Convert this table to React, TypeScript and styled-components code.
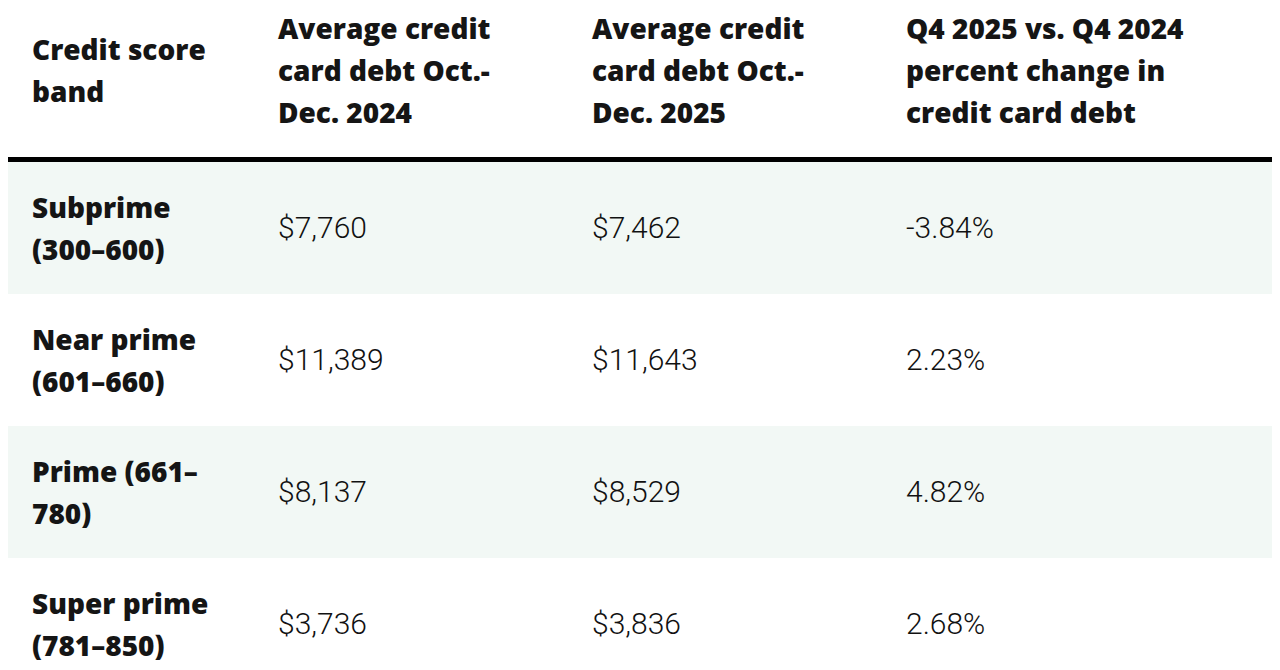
import styled, { createGlobalStyle } from "styled-components";

const GlobalStyle = createGlobalStyle`
  body {
    margin: 0 8px;
    background: #ffffff;
    color: #151515;
    font-family: "Open Sans", "Liberation Sans", sans-serif;
  }
`;

const Table = styled.table`
  width: 100%;
  border-collapse: collapse;
  table-layout: fixed;
`;

const Col = styled.col<{ $width?: number }>`
  width: ${(p) => (p.$width ? `${p.$width}px` : "auto")};
`;

const HeadCell = styled.th`
  padding: 7px 24px 24px;
  border-bottom: 5px solid #000000;
  text-align: left;
  vertical-align: middle;
  font-size: 28px;
  line-height: 42px;
  font-weight: 800;
  color: #151515;
`;

const Row = styled.tr<{ $shaded: boolean }>`
  background: ${(p) => (p.$shaded ? "#f2f8f5" : "#ffffff")};
`;

const LabelCell = styled.td`
  padding: 24px;
  vertical-align: middle;
  font-size: 28px;
  line-height: 42px;
  font-weight: 800;
  color: #151515;
`;

const ValueCell = styled.td`
  padding: 24px;
  vertical-align: middle;
  font-family: Roboto, "Liberation Sans", sans-serif;
  font-size: 30px;
  font-weight: 300;
  line-height: 42px;
  color: #111111;
`;

const headers = [
  ["Credit score", "band"],
  ["Average credit", "card debt Oct.-", "Dec. 2024"],
  ["Average credit", "card debt Oct.-", "Dec. 2025"],
  ["Q4 2025 vs. Q4 2024", "percent change in", "credit card debt"],
];

const rows = [
  { label: ["Subprime", "(300–600)"], values: ["$7,760", "$7,462", "-3.84%"] },
  { label: ["Near prime", "(601–660)"], values: ["$11,389", "$11,643", "2.23%"] },
  { label: ["Prime (661–", "780)"], values: ["$8,137", "$8,529", "4.82%"] },
  { label: ["Super prime", "(781–850)"], values: ["$3,736", "$3,836", "2.68%"] },
];

function Lines({ lines }: { lines: string[] }) {
  return (
    <>
      {lines.map((line, i) => (
        <span key={i}>
          {i > 0 && <br />}
          {line}
        </span>
      ))}
    </>
  );
}

export default function App() {
  return (
    <>
      <GlobalStyle />
      <Table>
        <colgroup>
          <Col $width={246} />
          <Col $width={314} />
          <Col $width={314} />
          <Col />
        </colgroup>
        <thead>
          <tr>
            {headers.map((h, i) => (
              <HeadCell key={i}>
                <Lines lines={h} />
              </HeadCell>
            ))}
          </tr>
        </thead>
        <tbody>
          {rows.map((row, i) => (
            <Row key={i} $shaded={i % 2 === 0}>
              <LabelCell>
                <Lines lines={row.label} />
              </LabelCell>
              {row.values.map((v, j) => (
                <ValueCell key={j}>{v}</ValueCell>
              ))}
            </Row>
          ))}
        </tbody>
      </Table>
    </>
  );
}
